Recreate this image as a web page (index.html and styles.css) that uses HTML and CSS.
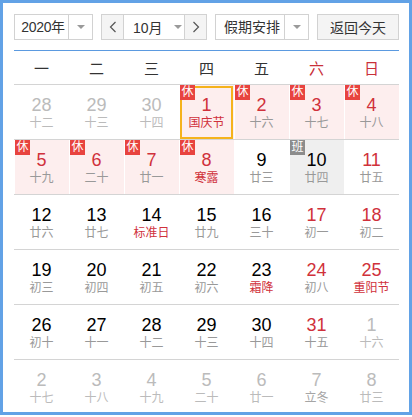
FILE: index.html
```html
<!DOCTYPE html>
<html lang="zh-CN">
<head>
<meta charset="utf-8">
<title>日历</title>
<link rel="stylesheet" href="styles.css">
</head>
<body>
<div class="cal">
  <div class="bar">
    <div class="sel sel-year"><span class="val">2020年</span><span class="drop"><i class="tri"></i></span></div>
    <div class="month-group">
      <span class="nav"><svg width="8" height="12" viewBox="0 0 8 12"><path d="M6.5 1 L1.5 6 L6.5 11" fill="none" stroke="#555" stroke-width="1.2"/></svg></span>
      <span class="month"><span class="val">10月</span><i class="tri"></i></span>
      <span class="nav"><svg width="8" height="12" viewBox="0 0 8 12"><path d="M1.5 1 L6.5 6 L1.5 11" fill="none" stroke="#555" stroke-width="1.2"/></svg></span>
    </div>
    <div class="sel sel-hol"><span class="val">假期安排</span><span class="drop"><i class="tri"></i></span></div>
    <div class="today-btn">返回今天</div>
  </div>
  <div class="rule"></div>
  <div class="week">
    <span>一</span><span>二</span><span>三</span><span>四</span><span>五</span><span class="red">六</span><span class="red">日</span>
  </div>
  <div class="rows">
    <div class="row">
      <div class="cell other"><b>28</b><em>十二</em></div>
      <div class="cell other"><b>29</b><em>十三</em></div>
      <div class="cell other"><b>30</b><em>十四</em></div>
      <div class="cell rest today red fest"><i class="tag">休</i><b>1</b><em>国庆节</em></div>
      <div class="cell rest red"><i class="tag">休</i><b>2</b><em>十六</em></div>
      <div class="cell rest red"><i class="tag">休</i><b>3</b><em>十七</em></div>
      <div class="cell rest red"><i class="tag">休</i><b>4</b><em>十八</em></div>
    </div>
    <div class="row">
      <div class="cell rest red"><i class="tag">休</i><b>5</b><em>十九</em></div>
      <div class="cell rest red"><i class="tag">休</i><b>6</b><em>二十</em></div>
      <div class="cell rest red"><i class="tag">休</i><b>7</b><em>廿一</em></div>
      <div class="cell rest red fest"><i class="tag">休</i><b>8</b><em>寒露</em></div>
      <div class="cell"><b>9</b><em>廿三</em></div>
      <div class="cell work"><i class="tag tag-work">班</i><b>10</b><em>廿四</em></div>
      <div class="cell red"><b>11</b><em>廿五</em></div>
    </div>
    <div class="row">
      <div class="cell"><b>12</b><em>廿六</em></div>
      <div class="cell"><b>13</b><em>廿七</em></div>
      <div class="cell fest"><b>14</b><em>标准日</em></div>
      <div class="cell"><b>15</b><em>廿九</em></div>
      <div class="cell"><b>16</b><em>三十</em></div>
      <div class="cell red"><b>17</b><em>初一</em></div>
      <div class="cell red"><b>18</b><em>初二</em></div>
    </div>
    <div class="row">
      <div class="cell"><b>19</b><em>初三</em></div>
      <div class="cell"><b>20</b><em>初四</em></div>
      <div class="cell"><b>21</b><em>初五</em></div>
      <div class="cell"><b>22</b><em>初六</em></div>
      <div class="cell fest"><b>23</b><em>霜降</em></div>
      <div class="cell red"><b>24</b><em>初八</em></div>
      <div class="cell red fest"><b>25</b><em>重阳节</em></div>
    </div>
    <div class="row">
      <div class="cell"><b>26</b><em>初十</em></div>
      <div class="cell"><b>27</b><em>十一</em></div>
      <div class="cell"><b>28</b><em>十二</em></div>
      <div class="cell"><b>29</b><em>十三</em></div>
      <div class="cell"><b>30</b><em>十四</em></div>
      <div class="cell red"><b>31</b><em>十五</em></div>
      <div class="cell other"><b>1</b><em>十六</em></div>
    </div>
    <div class="row last">
      <div class="cell other"><b>2</b><em>十七</em></div>
      <div class="cell other"><b>3</b><em>十八</em></div>
      <div class="cell other"><b>4</b><em>十九</em></div>
      <div class="cell other"><b>5</b><em>二十</em></div>
      <div class="cell other"><b>6</b><em>廿一</em></div>
      <div class="cell other term"><b>7</b><em>立冬</em></div>
      <div class="cell other"><b>8</b><em>廿三</em></div>
    </div>
  </div>
</div>
</body>
</html>
```
FILE: styles.css
```css
* { box-sizing: border-box; }
html, body { margin: 0; padding: 0; background: #fff; }
body {
  font-family: "Liberation Sans", Arial, "Noto Sans CJK SC", sans-serif;
  color: #333;
}
.cal {
  width: 412px;
  height: 415px;
  border: 3px solid #62a2e6;
  padding: 11px 10px 0 11px;
  overflow: hidden;
  background: #fff;
}
.bar {
  display: flex;
  gap: 8px;
  height: 26px;
  width: 385px;
}
.sel, .month-group, .today-btn {
  height: 26px;
  border: 1px solid #d2d2d2;
  display: flex;
  align-items: center;
  font-size: 14px;
  color: #333;
  white-space: nowrap;
}
.sel .val {
  flex: 1;
  text-align: center;
  line-height: 24px;
}
.sel .drop {
  width: 24px;
  height: 24px;
  border-left: 1px solid #d2d2d2;
  display: flex;
  align-items: center;
  justify-content: center;
}
.tri {
  width: 0;
  height: 0;
  border-left: 4px solid transparent;
  border-right: 4px solid transparent;
  border-top: 4px solid #9a9a9a;
}
.sel-year { width: 79px; }
.sel-year .val { padding-left: 3px; letter-spacing: -0.3px; }
.month-group { width: 106px; }
.nav {
  width: 22px;
  height: 24px;
  background: #f4f4f4;
  display: flex;
  align-items: center;
  justify-content: center;
}
.nav:first-child { border-right: 1px solid #d2d2d2; }
.nav:last-child { border-left: 1px solid #d2d2d2; }
.month {
  flex: 1;
  display: flex;
  align-items: center;
  padding-left: 9px;
  gap: 11px;
}
.sel-hol { width: 94px; }
.sel-hol .val { padding-left: 4px; }
.today-btn {
  width: 82px;
  justify-content: center;
  background: #f4f4f4;
}
.rule {
  margin-top: 10px;
  height: 1px;
  width: 385px;
  background: #5b9ae0;
}
.week {
  display: grid;
  grid-template-columns: repeat(7, 55px);
  height: 34px;
  border-bottom: 1px solid #d4d4d4;
  font-size: 15px;
  color: #333;
  align-items: center;
  text-align: center;
}
.week .red { color: #c9303a; }
.rows { width: 385px; }
.row {
  display: grid;
  grid-template-columns: repeat(7, 55px);
  height: 55px;
  border-bottom: 1px solid #d4d4d4;
}
.row.last { border-bottom: none; }
.cell {
  position: relative;
  display: flex;
  flex-direction: column;
  align-items: center;
  padding-top: 9px;
  box-shadow: inset 1px 0 0 #fff;
}
.cell b {
  font-weight: normal;
  font-size: 18px;
  line-height: 22px;
  color: #000;
}
.cell em {
  font-style: normal;
  font-size: 12px;
  line-height: 14px;
  color: #999;
}
.cell.red b { color: #d0313b; }
.cell.fest em { color: #d0313b; }
.cell.other b { color: #bbb; }
.cell.other em { color: #bbb; }
.cell.other.term em { color: #a5a5a5; }
.cell.rest { background: #fdeeee; }
.cell.work { background: #efefef; }
.tag {
  position: absolute;
  left: 1px;
  top: 0;
  width: 15px;
  height: 15px;
  background: #e8433f;
  color: #fff;
  font-style: normal;
  font-size: 12px;
  line-height: 15px;
  text-align: center;
  z-index: 2;
}
.tag-work { background: #8c8c8c; }
.cell.today::after {
  content: "";
  position: absolute;
  left: 1px;
  top: 1px;
  right: 1px;
  bottom: 0;
  border: 2px solid #f5b31c;
  z-index: 1;
}
```
